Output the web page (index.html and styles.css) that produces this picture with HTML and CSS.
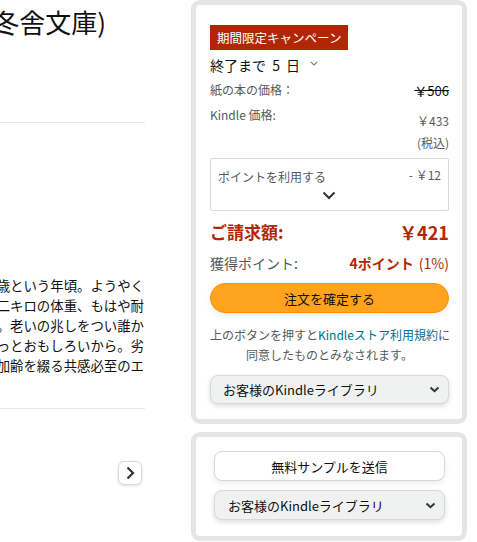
FILE: index.html
```html
<!DOCTYPE html>
<html lang="ja">
<head>
<meta charset="utf-8">
<title>Kindle</title>
<link rel="stylesheet" href="styles.css">
</head>
<body>
<div class="page">
  <div class="main">
    <div class="title-row"><h1 class="title">今日もていねいに(幻冬舎文庫)</h1></div>
    <hr class="divider divider-top">
    <div class="desc">
      <div class="line"><span>気がつけば五十歳という年頃。ようやく</span></div>
      <div class="line"><span>増えてしまった二キロの体重、もはや耐</span></div>
      <div class="line"><span>えられない夜更かし。老いの兆しをつい誰か</span></div>
      <div class="line"><span>に話したくなるのは、きっとおもしろいから。劣</span></div>
      <div class="line"><span>化ではなく変化として加齢を綴る共感必至のエ</span></div>
    </div>
    <hr class="divider divider-bottom">
    <div class="nav-row">
      <button class="nav-btn" type="button" aria-label="次へ">
        <svg width="10" height="14" viewBox="0 0 10 14"><path d="M2.5 1.5 L8 7 L2.5 12.5" fill="none" stroke="#333" stroke-width="2.2"/></svg>
      </button>
    </div>
  </div>

  <aside class="side">
    <div class="buybox">
      <div class="badge">期間限定キャンペーン</div>
      <div class="deadline">終了まで 5 日
        <svg class="mini-chev" width="8" height="5" viewBox="0 0 8 5"><path d="M0.8 0.8 L4 4 L7.2 0.8" fill="none" stroke="#777" stroke-width="1.1"/></svg>
      </div>
      <div class="price-row">
        <span class="label">紙の本の価格：</span>
        <span class="list-price">￥506</span>
      </div>
      <div class="price-row kindle-row">
        <span class="label">Kindle 価格:</span>
        <span class="kindle-price"><span>￥433</span><span>(税込)</span></span>
      </div>
      <div class="points-box">
        <div class="points-top">
          <span class="points-label">ポイントを利用する</span>
          <span class="points-amount">- ￥12</span>
        </div>
        <div class="points-chev">
          <svg width="14" height="9" viewBox="0 0 14 9"><path d="M1.5 1.5 L7 7 L12.5 1.5" fill="none" stroke="#333" stroke-width="2"/></svg>
        </div>
      </div>
      <div class="total-row">
        <span>ご請求額:</span>
        <span>￥421</span>
      </div>
      <div class="earn-row">
        <span class="label-lg">獲得ポイント:</span>
        <span class="earn"><b>4ポイント</b> (1%)</span>
      </div>
      <button class="order-btn" type="button">注文を確定する</button>
      <p class="terms">上のボタンを押すと<span class="link">Kindleストア利用規約</span>に<br>同意したものとみなされます。</p>
      <div class="select">
        <span>お客様のKindleライブラリ</span>
        <svg width="11" height="7" viewBox="0 0 11 7"><path d="M1.5 1.5 L5.5 5.2 L9.5 1.5" fill="none" stroke="#333" stroke-width="2"/></svg>
      </div>
    </div>

    <div class="buybox sample-box">
      <button class="sample-btn" type="button">無料サンプルを送信</button>
      <div class="select">
        <span>お客様のKindleライブラリ</span>
        <svg width="11" height="7" viewBox="0 0 11 7"><path d="M1.5 1.5 L5.5 5.2 L9.5 1.5" fill="none" stroke="#333" stroke-width="2"/></svg>
      </div>
    </div>
  </aside>
</div>
</body>
</html>
```

FILE: styles.css
```css
* { box-sizing: border-box; }

html, body {
  margin: 0;
  padding: 0;
  background: #fff;
  overflow: hidden;
}

body {
  font-family: "Noto Sans CJK JP", "Noto Sans", sans-serif;
  color: #0f1111;
}

.page {
  display: flex;
  align-items: flex-start;
}

/* left column */
.main {
  width: 145px;
  flex: none;
  margin-right: 46px;
}

.title-row {
  width: 106px;
  display: flex;
  justify-content: flex-end;
  white-space: nowrap;
  margin-top: 4px;
}

.title {
  margin: 0;
  font-weight: 400;
  font-size: 26px;
  line-height: 36px;
  flex: none;
}

.divider {
  border: 0;
  border-top: 1px solid #e7e7e7;
  height: 0;
  margin: 0;
}

.divider-top { margin-top: 82px; }

.desc {
  margin-top: 152px;
  font-size: 13.4px;
  line-height: 20px;
}

.line {
  display: flex;
  justify-content: flex-end;
  white-space: nowrap;
  width: 144px;
}

.line span { flex: none; }

.divider-bottom { margin-top: 33px; }

.nav-row {
  display: flex;
  justify-content: flex-end;
  padding-right: 3px;
  margin-top: 52px;
}

.nav-btn {
  width: 24px;
  height: 24px;
  padding: 0;
  border: 1px solid #d5d9d9;
  border-radius: 6px;
  background: #fff;
  box-shadow: 0 1px 3px rgba(15,17,17,.12);
  display: flex;
  align-items: center;
  justify-content: center;
}

/* right column */
.side {
  width: 276px;
  flex: none;
  display: flex;
  flex-direction: column;
  gap: 8px;
}

.buybox {
  border: 5px solid #e5e5e5;
  border-radius: 9px;
  padding: 19px 13px 15px 14px;
  background: #fff;
}

.badge {
  display: inline-block;
  background: #b12704;
  color: #fff;
  font-size: 12.5px;
  line-height: 25px;
  height: 25px;
  padding: 0 7px;
}

.deadline {
  margin-top: 5px;
  font-size: 14px;
  line-height: 20px;
  word-spacing: 3px;
  display: flex;
  align-items: center;
}

.mini-chev { margin-left: 10px; margin-top: -4px; }

.price-row {
  display: flex;
  justify-content: space-between;
  align-items: flex-start;
  margin-top: 6px;
}

.label {
  font-size: 12px;
  line-height: 18px;
  color: #565959;
}

.list-price {
  font-size: 13px;
  line-height: 20px;
  color: #0f1111;
  text-decoration: line-through;
}

.kindle-row { margin-top: 5px; }

.kindle-price {
  display: flex;
  flex-direction: column;
  align-items: flex-end;
  margin-top: 4px;
  font-size: 12px;
  line-height: 22px;
  color: #565959;
}

.points-box {
  margin-top: 4px;
  height: 53px;
  border: 1px solid #d5d9d9;
  border-radius: 2px;
  padding: 6px 7px 0 7px;
}

.points-top {
  display: flex;
  justify-content: space-between;
  align-items: flex-start;
  color: #565959;
  font-size: 12px;
}

.points-label { line-height: 20px; margin-top: 2px; }
.points-amount { line-height: 20px; }

.points-chev {
  display: flex;
  justify-content: center;
  margin-top: 4px;
  padding-right: 2px;
}

.total-row {
  margin-top: 9px;
  display: flex;
  justify-content: space-between;
  align-items: center;
  color: #b12704;
  font-weight: 700;
  font-size: 17px;
  line-height: 24px;
}

.total-row span:last-child { font-size: 18px; }

.earn-row {
  margin-top: 9px;
  display: flex;
  justify-content: space-between;
  align-items: center;
  line-height: 20px;
}

.label-lg {
  font-size: 14px;
  color: #565959;
}

.earn {
  font-size: 14px;
  color: #b12704;
  word-spacing: 2px;
}

.earn b { font-weight: 700; }

.order-btn {
  display: block;
  width: 100%;
  margin-top: 10px;
  height: 30px;
  border: 1px solid #ff8f00;
  border-radius: 15px;
  background: #ffa41c;
  color: #0f1111;
  font-family: inherit;
  font-size: 13px;
  padding: 0;
  box-shadow: 0 2px 5px rgba(213,217,217,.5);
}

.terms {
  margin: 12px 0 0;
  text-align: center;
  white-space: nowrap;
  font-size: 12px;
  line-height: 20px;
  color: #565959;
}

.link { color: #007185; }

.select {
  margin-top: 10px;
  height: 29px;
  border: 1px solid #d5d9d9;
  border-radius: 8px;
  background: #f0f2f2;
  box-shadow: 0 2px 5px rgba(15,17,17,.15);
  display: flex;
  align-items: center;
  justify-content: space-between;
  padding: 0 8px 0 12px;
  font-size: 13px;
  color: #0f1111;
}

.sample-box {
  padding: 14px 17px 16px 18px;
}

.sample-btn {
  display: block;
  width: 100%;
  height: 30px;
  border: 1px solid #d5d9d9;
  border-radius: 8px;
  background: #fff;
  box-shadow: 0 2px 5px rgba(213,217,217,.5);
  font-family: inherit;
  font-size: 13px;
  color: #0f1111;
  padding: 0;
}

.sample-box .select {
  margin-top: 9px;
  height: 30px;
  padding-left: 13px;
}
```
